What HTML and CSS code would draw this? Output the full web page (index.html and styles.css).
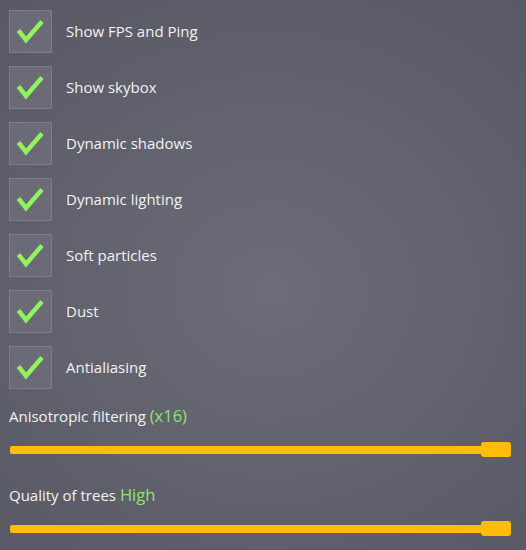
FILE: index.html
```html
<!DOCTYPE html>
<html>
<head>
<meta charset="utf-8">
<link rel="stylesheet" href="styles.css">
</head>
<body>
<div class="panel">
  <div class="opt"><span class="box"><svg viewBox="0 0 43 43" width="43" height="43"><path d="M9.5 20.5 L17 30 L33 11.5" /></svg></span><span class="lbl">Show FPS and Ping</span></div>
  <div class="opt"><span class="box"><svg viewBox="0 0 43 43" width="43" height="43"><path d="M9.5 20.5 L17 30 L33 11.5" /></svg></span><span class="lbl">Show skybox</span></div>
  <div class="opt"><span class="box"><svg viewBox="0 0 43 43" width="43" height="43"><path d="M9.5 20.5 L17 30 L33 11.5" /></svg></span><span class="lbl">Dynamic shadows</span></div>
  <div class="opt"><span class="box"><svg viewBox="0 0 43 43" width="43" height="43"><path d="M9.5 20.5 L17 30 L33 11.5" /></svg></span><span class="lbl">Dynamic lighting</span></div>
  <div class="opt"><span class="box"><svg viewBox="0 0 43 43" width="43" height="43"><path d="M9.5 20.5 L17 30 L33 11.5" /></svg></span><span class="lbl">Soft particles</span></div>
  <div class="opt"><span class="box"><svg viewBox="0 0 43 43" width="43" height="43"><path d="M9.5 20.5 L17 30 L33 11.5" /></svg></span><span class="lbl">Dust</span></div>
  <div class="opt"><span class="box"><svg viewBox="0 0 43 43" width="43" height="43"><path d="M9.5 20.5 L17 30 L33 11.5" /></svg></span><span class="lbl">Antialiasing</span></div>
  <div class="setting first">
    <div class="slabel">Anisotropic filtering <span class="val">(x16)</span></div>
    <div class="slider"><div class="track"></div><div class="thumb"></div></div>
  </div>
  <div class="setting">
    <div class="slabel">Quality of trees <span class="val">High</span></div>
    <div class="slider"><div class="track"></div><div class="thumb"></div></div>
  </div>
</div>
</body>
</html>
```
FILE: styles.css
```css
html, body {
  margin: 0;
  height: 100%;
}
body {
  width: 526px;
  height: 550px;
  overflow: hidden;
  background: radial-gradient(ellipse 420px 380px at 270px 290px, #6b6c78 0%, #62636f 45%, #575863 100%);
  font-family: "Open Sans", sans-serif;
  font-size: 15px;
  color: #f2f2f2;
}
.panel {
  display: flex;
  flex-direction: column;
  padding: 10px 15px 0 9px;
}
.opt {
  display: flex;
  align-items: center;
  height: 43px;
  margin-bottom: 13px;
}
.box {
  width: 43px;
  height: 43px;
  box-sizing: border-box;
  border: 1px solid #7d7e89;
  background: #6a6b77;
  display: block;
  position: relative;
  flex: none;
}
.box svg {
  position: absolute;
  left: -1px;
  top: -1px;
}
.box path {
  fill: none;
  stroke: #8ff25e;
  stroke-width: 4.5;
  stroke-linecap: butt;
  stroke-linejoin: miter;
}
.lbl {
  margin-left: 14px;
  line-height: 20px;
  padding-bottom: 2px;
}
.setting.first {
  margin-top: 4px;
}
.slabel {
  line-height: 20px;
  font-size: 15px;
}
.val {
  color: #8ee66b;
  font-size: 16.5px;
}
.slider {
  position: relative;
  height: 16px;
  margin-top: 16px;
  margin-left: 1px;
  display: flex;
  align-items: center;
  margin-bottom: 27px;
}
.track {
  flex: 1;
  height: 8px;
  background: #ffbd0a;
  border-radius: 2px;
}
.thumb {
  position: absolute;
  right: 0;
  top: 0;
  width: 30px;
  height: 15px;
  background: #ffbd0a;
  border-radius: 3px;
}
```
